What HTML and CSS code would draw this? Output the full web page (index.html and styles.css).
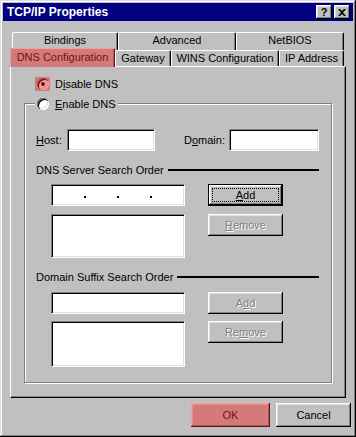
FILE: index.html
```html
<!DOCTYPE html>
<html lang="en">
<head>
<meta charset="UTF-8" />
<title>TCP/IP Properties</title>
<link rel="stylesheet" href="styles.css">
</head>
<body>
<div class="window">
  <div class="titlebar">
    <span class="title">TCP/IP Properties</span>
    <div class="title-btns">
      <span class="title-btn">?</span>
      <span class="title-btn">
        <svg width="8" height="7" viewBox="0 0 8 7"><path d="M0 0h2l2 2 2-2h2L5 3.5 8 7H6L4 5 2 7H0l3-3.5z" fill="#000"/></svg>
      </span>
    </div>
  </div>

  <div class="content">
    <!-- Tab strip, two rows -->
    <div class="tabs">
      <div class="tabrow back">
        <span class="tab w-bind">Bindings</span>
        <span class="tab w-adv">Advanced</span>
        <span class="tab w-net">NetBIOS</span>
      </div>
      <div class="tabrow front">
        <span class="tab sel hl w-dns">DNS Configuration</span>
        <span class="tab w-gate">Gateway</span>
        <span class="tab w-wins">WINS Configuration</span>
        <span class="tab w-ip">IP Address</span>
      </div>
    </div>

    <div class="panel">
      <div class="opt">
        <span class="radio-hl hl"><span class="radio on"></span></span>
        <span class="opt-text">D<u>i</u>sable DNS</span>
      </div>

      <div class="group">
        <div class="legend">
          <span class="radio"></span>
          <span class="opt-text"><u>E</u>nable DNS</span>
        </div>

        <div class="host-row">
          <span class="lbl lbl-host"><u>H</u>ost:</span>
          <span class="field f-host"></span>
          <span class="lbl lbl-domain">D<u>o</u>main:</span>
          <span class="field f-domain"></span>
        </div>

        <div class="heading h-dns"><span>DNS Server Search Order</span><span class="rule"></span></div>
        <div class="pair p-ip">
          <div class="field col ip">
            <span class="seg"></span><span class="dot"></span>
            <span class="seg"></span><span class="dot"></span>
            <span class="seg"></span><span class="dot"></span>
            <span class="seg"></span>
          </div>
          <span class="btn small default"><span class="focus"><u>A</u>dd</span></span>
        </div>
        <div class="pair p-list">
          <div class="field col list"></div>
          <span class="btn small disabled"><u>R</u>emove</span>
        </div>

        <div class="heading h-suffix"><span>Domain Suffix Search Order</span><span class="rule"></span></div>
        <div class="pair p-suffix">
          <div class="field col"></div>
          <span class="btn small disabled">A<u>d</u>d</span>
        </div>
        <div class="pair p-list2">
          <div class="field col list2"></div>
          <span class="btn small disabled">Re<u>m</u>ove</span>
        </div>
      </div>
    </div>

    <div class="actions">
      <span class="btn big ok hl">OK</span>
      <span class="btn big cancel">Cancel</span>
    </div>
  </div>
</div>
</body>
</html>
```

FILE: styles.css
```css
/* Reset and base styles */
* {
  margin: 0;
  padding: 0;
  box-sizing: border-box;
}
body {
  font-family: 'Liberation Sans', Arial, sans-serif;
  font-size: 11px;
  color: #000;
  background: #c0c0c0;
}
u {
  text-decoration: underline;
  text-underline-offset: 1px;
}

/* Window frame */
.window {
  width: 356px;
  height: 437px;
  padding: 3px;
  background: #c0c0c0;
  box-shadow: inset -1px -1px #000, inset 1px 1px #dfdfdf,
              inset -2px -2px #808080, inset 2px 2px #fff;
}
.titlebar {
  height: 18px;
  background: #000080;
  color: #fff;
  display: flex;
  align-items: center;
  justify-content: space-between;
  padding: 0 3px 0 4px;
}
.title {
  font-weight: bold;
  font-size: 12px;
}
.title-btns {
  display: flex;
  gap: 2px;
}
.title-btn {
  width: 16px;
  height: 14px;
  background: #c0c0c0;
  color: #000;
  font-weight: bold;
  font-size: 11px;
  display: flex;
  align-items: center;
  justify-content: center;
  box-shadow: inset -1px -1px #000, inset 1px 1px #fff,
              inset -2px -2px #808080, inset 2px 2px #dfdfdf;
}

.content {
  padding: 0 0 0 7px;
}

/* Tabs */
.tabs {
  margin-top: 11px;
}
.tabrow {
  display: flex;
}
.tabrow.back {
  margin-left: 2px;
  height: 18px;
}
.tabrow.front {
  height: 16px;
  align-items: flex-end;
}
.tab {
  position: relative;
  height: 100%;
  text-align: center;
  line-height: 15px;
  background: #c0c0c0;
  border: 1px solid;
  border-color: #fff #000 transparent #fff;
  border-bottom: none;
  border-radius: 2px 2px 0 0;
  box-shadow: inset -1px 0 #808080;
}
.tab.sel {
  height: 19px;
  margin-bottom: -1px;
  line-height: 16px;
  z-index: 1;
}
.w-bind { width: 106px; }
.w-adv { width: 118px; }
.w-net { width: 108px; }
.w-dns { width: 105px; }
.w-gate { width: 56px; }
.w-wins { width: 108px; }
.w-ip { width: 65px; }

/* Red highlight laid over an element */
.hl {
  position: relative;
}
.hl::after {
  content: "";
  position: absolute;
  inset: 0;
  background: rgba(236, 40, 40, 0.45);
  pointer-events: none;
}
.tab.hl::after {
  inset: -1px -1px 0 -1px;
}

/* Page panel */
.panel {
  width: 336px;
  height: 332px;
  border: 1px solid;
  border-color: #fff #000 #000 #fff;
  box-shadow: inset -1px -1px #808080;
  padding: 9px 13px 0 13px;
}
.opt {
  display: flex;
  align-items: center;
  height: 16px;
  margin-left: 11px;
}
.radio-hl {
  width: 15px;
  height: 14px;
  display: flex;
  align-items: center;
  justify-content: center;
}
.radio {
  position: relative;
  display: block;
  width: 12px;
  height: 12px;
  border-radius: 50%;
  background: #fff;
  box-shadow: inset 1px 1px #808080, inset 2px 2px #000,
              inset -1px -1px #fff, inset -2px -2px #dfdfdf;
}
.radio.on::after {
  content: "";
  position: absolute;
  left: 4px;
  top: 4px;
  width: 4px;
  height: 4px;
  border-radius: 50%;
  background: #000;
}
.opt-text {
  margin-left: 5px;
}

/* Group box */
.group {
  margin-top: 11px;
  height: 280px;
  border: 1px solid #808080;
  box-shadow: inset 1px 1px #fff, 1px 1px #fff;
  padding: 0 12px 0 11px;
}
.legend {
  display: flex;
  align-items: center;
  width: fit-content;
  height: 14px;
  margin: -7px 0 0 -1px;
  padding: 0 2px 0 2px;
  background: #c0c0c0;
}
.legend .opt-text {
  margin-left: 6px;
}

.host-row {
  display: flex;
  align-items: center;
  margin-top: 18px;
  height: 22px;
}
.lbl-host { width: 31px; }
.lbl-domain { width: 45px; margin-left: 29px; }
.f-host { width: 88px; }
.f-domain { width: 90px; }

.field {
  display: block;
  height: 22px;
  background: #fff;
  border: 1px solid;
  border-color: #808080 #fff #fff #808080;
  box-shadow: inset 1px 1px #000, inset -1px -1px #dfdfdf;
}

.heading {
  display: flex;
  align-items: center;
  height: 12px;
  line-height: 12px;
}
.heading .rule {
  flex: 1;
  height: 2px;
  background: #000;
  margin-left: 4px;
}
.h-dns { margin-top: 13px; }
.h-suffix { margin-top: 13px; }

.pair {
  display: flex;
  align-items: flex-start;
  margin-left: 15px;
}
.p-ip { margin-top: 8px; }
.p-list { margin-top: 8px; }
.p-suffix { margin-top: 9px; }
.p-list2 { margin-top: 7px; }
.col { width: 134px; }
.list { height: 44px; }
.list2 { height: 46px; }

.ip {
  display: flex;
  align-items: center;
  padding: 0 1px;
}
.ip .seg {
  flex: 1;
}
.ip .dot {
  width: 2px;
  height: 2px;
  background: #000;
  margin-top: 4px;
}

/* Push buttons */
.btn {
  display: flex;
  align-items: center;
  justify-content: center;
  background: #c0c0c0;
  box-shadow: inset -1px -1px #000, inset 1px 1px #fff,
              inset -2px -2px #808080, inset 2px 2px #dfdfdf;
}
.btn.small {
  width: 75px;
  height: 22px;
  margin-left: 23px;
}
.btn.default {
  border: 1px solid #000;
  padding: 3px;
}
.btn.default .focus {
  width: 100%;
  height: 100%;
  display: flex;
  align-items: center;
  justify-content: center;
  border: 1px dotted #000;
}
.btn.disabled {
  color: #808080;
  text-shadow: 1px 1px #fff;
}

.actions {
  display: flex;
  justify-content: flex-end;
  gap: 6px;
  margin-top: 5px;
  padding-right: 2px;
}
.btn.big {
  height: 24px;
}
.ok { width: 79px; }
.cancel { width: 75px; }
```
